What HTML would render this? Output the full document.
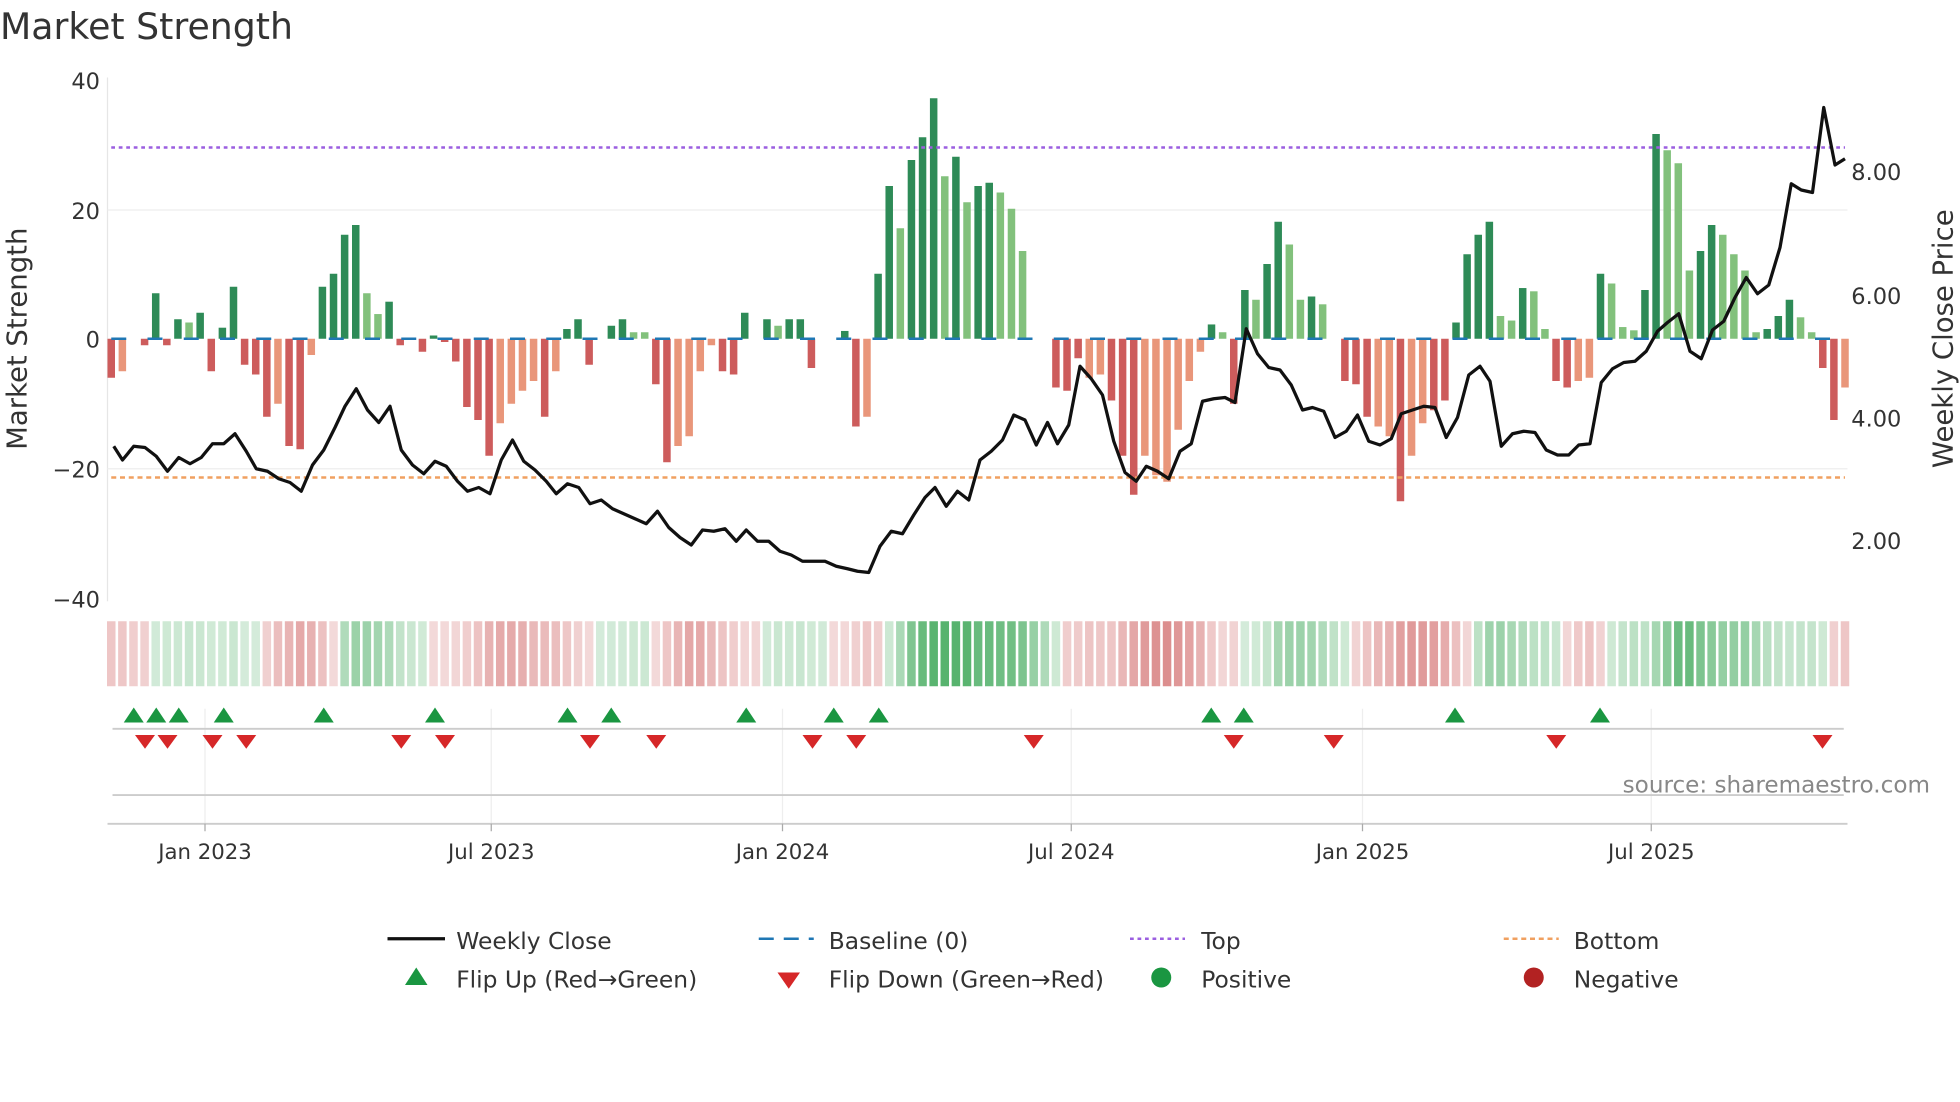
<!DOCTYPE html>
<html><head><meta charset="utf-8"><style>
html,body{margin:0;padding:0;background:#fff;}
svg{display:block;font-family:"DejaVu Sans","Liberation Sans",sans-serif;}
</style></head><body>
<svg id="s" width="1960" height="1102" viewBox="0 0 1568 881.6" xmlns="http://www.w3.org/2000/svg">
<rect width="1568" height="882" fill="#fff"/>
<text x="0" y="31" font-size="29" fill="#333">Market Strength</text>
<g font-size="18" fill="#333" text-anchor="end">
<text x="80" y="71">40</text><text x="80" y="175">20</text><text x="80" y="278">0</text><text x="80" y="382">−20</text><text x="80" y="486">−40</text>
</g>
<g font-size="18" fill="#333">
<text x="1481" y="144">8.00</text><text x="1481" y="243">6.00</text><text x="1481" y="341">4.00</text><text x="1481" y="439">2.00</text>
</g>
<text transform="translate(21,271) rotate(-90)" font-size="22" fill="#333" text-anchor="middle">Market Strength</text>
<text transform="translate(1562,271) rotate(-90)" font-size="22" fill="#333" text-anchor="middle">Weekly Close Price</text>
<line x1="86" y1="62" x2="86" y2="481" stroke="#e6e6e6" stroke-width="1"/>
<line x1="86" y1="168" x2="1478" y2="168" stroke="#eee"/>
<line x1="86" y1="375" x2="1478" y2="375" stroke="#eee"/>
<g id="bars"></g>
<line x1="89" y1="118" x2="1476" y2="118" stroke="#9b5fe0" stroke-width="2" stroke-dasharray="3,3"/>
<line x1="89" y1="382" x2="1476" y2="382" stroke="#f0a060" stroke-width="2" stroke-dasharray="4,3"/>
<polyline id="price" fill="none" stroke="#111" stroke-width="2.6" stroke-linejoin="round"/>
<g id="strip"></g>
<g stroke="#eee"><line x1="164" y1="567" x2="164" y2="660"/><line x1="393" y1="567" x2="393" y2="660"/><line x1="626" y1="567" x2="626" y2="660"/><line x1="857" y1="567" x2="857" y2="660"/><line x1="1090" y1="567" x2="1090" y2="660"/><line x1="1321" y1="567" x2="1321" y2="660"/></g>
<line x1="90" y1="583" x2="1475" y2="583" stroke="#ccc" stroke-width="1.5"/>
<line x1="90" y1="636" x2="1475" y2="636" stroke="#ccc" stroke-width="1.5"/>
<line x1="86" y1="659" x2="1478" y2="659" stroke="#ccc" stroke-width="1.5"/>
<g stroke="#aaa"><line x1="164" y1="659" x2="164" y2="665"/><line x1="393" y1="659" x2="393" y2="665"/><line x1="626" y1="659" x2="626" y2="665"/><line x1="857" y1="659" x2="857" y2="665"/><line x1="1090" y1="659" x2="1090" y2="665"/><line x1="1321" y1="659" x2="1321" y2="665"/></g>
<g id="flips"></g>
<text x="1544" y="634" font-size="18.5" fill="#888" text-anchor="end">source: sharemaestro.com</text>
<g font-size="17" fill="#333" text-anchor="middle">
<text x="164" y="687">Jan 2023</text><text x="393" y="687">Jul 2023</text><text x="626" y="687">Jan 2024</text><text x="857" y="687">Jul 2024</text><text x="1090" y="687">Jan 2025</text><text x="1321" y="687">Jul 2025</text>
</g>
<g font-size="18.7" fill="#333">
<line x1="310" y1="751" x2="356" y2="751" stroke="#111" stroke-width="2.6"/><text x="365" y="759">Weekly Close</text>
<line x1="607" y1="751" x2="651" y2="751" stroke="#1f77b4" stroke-width="2" stroke-dasharray="12,8"/><text x="663" y="759">Baseline (0)</text>
<line x1="904" y1="751" x2="948" y2="751" stroke="#9b5fe0" stroke-width="2" stroke-dasharray="3,3"/><text x="961" y="759">Top</text>
<line x1="1203" y1="751" x2="1247" y2="751" stroke="#f0a060" stroke-width="2" stroke-dasharray="4,3"/><text x="1259" y="759">Bottom</text>
<polygon points="324,788 342,788 333,774" fill="#1a9641"/><text x="365" y="790">Flip Up (Red→Green)</text>
<polygon points="622,778 640,778 631,791" fill="#d62728"/><text x="663" y="790">Flip Down (Green→Red)</text>
<circle cx="929" cy="782" r="8" fill="#1a9641"/><text x="961" y="790">Positive</text>
<circle cx="1227" cy="782" r="8" fill="#b22222"/><text x="1259" y="790">Negative</text>
</g>
</svg>
<script>
var V="-6r -5o 0 -1r 7g -1r 3g 2.5l 4g -5r 1.7g 8g -4r -5.5r -12r -10o -16.5r -17r -2.5o 8g 10g 16g 17.5g 7l 3.8l 5.7g -1r 0 -2r 0.5g -0.5r -3.5r -10.5r -12.5r -18r -13o -10o -8o -6.5o -12r -5o 1.5g 3g -4r 0 2g 3g 1l 1l -7r -19r -16.5o -15o -5o -1o -5r -5.5r 4g 0 3g 2l 3g 3g -4.5r 0 0 1.2g -13.5r -12o 10g 23.5g 17l 27.5g 31g 37g 25l 28g 21l 23.5g 24g 22.5l 20l 13.5l 0 0 -7.5r -8r -3r -6o -5.5o -9.5r -18r -24r -18o -21o -22o -14o -6.5o -2o 2.2g 1l -10r 7.5g 6l 11.5g 18g 14.5l 6l 6.5g 5.3l 0 -6.5r -7r -12r -13.5o -15o -25r -18o -13o -11r -9.5r 2.5g 13g 16g 18g 3.5l 2.8l 7.8g 7.3l 1.5l -6.5r -7.5r -6.5o -6o 10g 8.5l 1.8l 1.3l 7.5g 31.5g 29l 27l 10.5l 13.5g 17.5g 16l 13l 10.5l 1l 1.5g 3.5g 6g 3.3l 1l -4.5r -12.5r -7.5o".split(" ");
var C={g:"#2e8b57",l:"#82c17c",r:"#cd5c5c",o:"#e9967a"};
var ns="http://www.w3.org/2000/svg",bars=document.getElementById("bars"),strip=document.getElementById("strip");
function el(t,a,p){var e=document.createElementNS(ns,t);for(var k in a)e.setAttribute(k,a[k]);p.appendChild(e);return e;}
var n=V.length,step=(1476-89)/(n-1);
for(var i=0;i<n;i++){var s=V[i],v=parseFloat(s),c=s.slice(-1),x=89+i*step;
 if(v!==0){var h=Math.abs(v)*5.2;el("rect",{x:x-3,y:v>0?271-h:271,width:6,height:h,fill:C[c]},bars);}
 var a=0;for(var j=Math.max(0,i-3);j<=i;j++)a+=parseFloat(V[j]);a/=Math.min(4,i+1);
 var pos=a>=0,al=Math.min(0.85,0.22+Math.abs(a)/45);
 el("rect",{x:x-3.4,y:497,width:6.8,height:52,fill:pos?"#3aa655":"#cd5c5c","fill-opacity":al.toFixed(2)},strip);
}
el("line",{x1:89,y1:271,x2:1476,y2:271,stroke:"#1f77b4","stroke-width":2,"stroke-dasharray":"12,17"},bars);
var P=[91,357,98,368,107,357,116,358,125,365,134,377,143,366,152,371,161,366,170,355,179,355,188,347,197,361,205,375,214,377,223,383,232,386,241,393,250,372,259,360,268,342,276,325,285,311,294,328,303,338,312,325,321,360,330,372,339,379,348,369,357,373,366,385,374,393,383,390,392,395,401,368,410,352,419,369,428,376,437,385,445,395,454,387,463,390,472,403,481,400,490,407,499,411,508,415,517,419,526,409,535,422,544,430,553,436,562,424,571,425,580,423,589,433,597,424,606,433,615,433,624,441,633,444,642,449,651,449,660,449,669,453,678,455,686,457,695,458,704,437,713,425,722,427,731,412,740,398,748,390,757,405,766,393,775,400,784,368,793,361,802,352,811,332,820,336,829,356,838,338,846,355,855,340,864,293,873,303,882,316,891,353,900,378,909,385,917,373,926,377,935,383,944,361,953,355,962,321,971,319,980,318,988,322,997,263,1006,283,1015,294,1024,296,1033,308,1042,328,1050,326,1059,329,1068,350,1077,345,1086,332,1095,353,1104,356,1113,351,1121,331,1130,328,1139,325,1148,326,1157,350,1166,334,1175,300,1184,293,1192,305,1201,357,1210,347,1219,345,1228,346,1237,360,1246,364,1255,364,1263,356,1272,355,1281,306,1290,295,1299,290,1308,289,1317,281,1326,265,1334,258,1343,251,1352,281,1361,287,1370,264,1379,257,1388,238,1397,222,1406,235,1415,228,1424,198,1433,147,1441,152,1450,154,1459,86,1468,132,1476,127];
var pts=[];for(var i=0;i<P.length;i+=2)pts.push(P[i]+","+P[i+1]);
document.getElementById("price").setAttribute("points",pts.join(" "));
var f=document.getElementById("flips");
[107,125,143,179,259,348,454,489,597,667,703,969,995,1164,1280].forEach(function(x){el("polygon",{points:(x-8)+",578 "+(x+8)+",578 "+x+",566",fill:"#1a9641"},f);});
[116,134,170,197,321,356,472,525,650,685,827,987,1067,1245,1458].forEach(function(x){el("polygon",{points:(x-8)+",588 "+(x+8)+",588 "+x+",599",fill:"#d62728"},f);});
</script>
</body></html>
